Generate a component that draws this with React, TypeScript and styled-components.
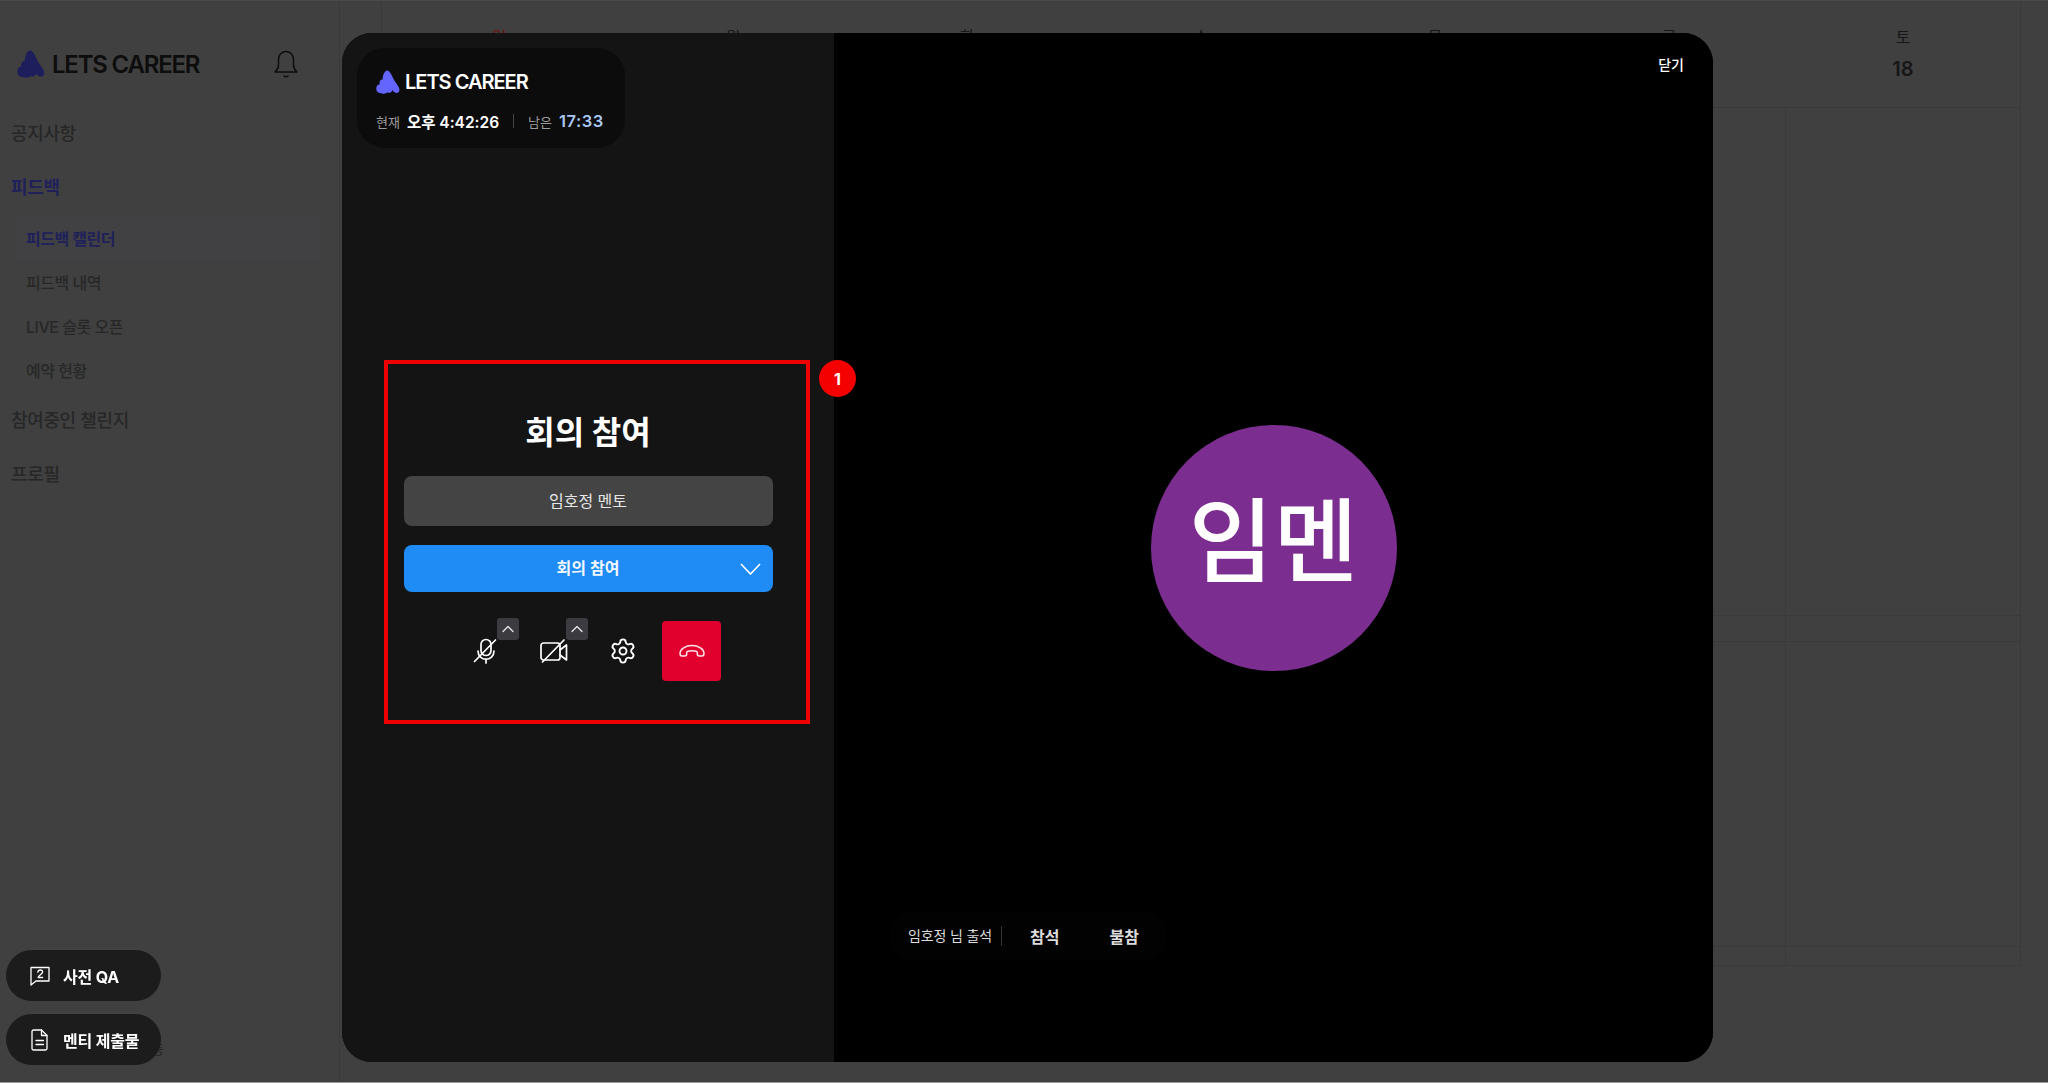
import styled, { createGlobalStyle } from "styled-components"
import { ChevronUp, Settings } from "lucide-react"

const GlobalStyle = createGlobalStyle`
    * {
        box-sizing: border-box;
    }
    html, body {
        margin: 0;
        background: #9a9a9a;
        font-family: Inter, "Noto Sans CJK KR", sans-serif;
    }
`
const Page = styled.div`
    height: 1082px;
    display: flex;
    overflow: hidden;
    background: #404040;
    border-top: 1px solid #4a4a4a;
`
const Sidebar = styled.aside`
    width: 340px;
    flex-shrink: 0;
    display: flex;
    flex-direction: column;
    border-right: 1px solid #3a3a3a;
    padding-top: 48px;
`
const BrandRow = styled.div`
    height: 30px;
    margin-bottom: 26px;
    padding: 0 40px 0 17px;
    display: flex;
    align-items: center;
    justify-content: space-between;
`
const Brand = styled.div<{ $size: number; $gap: number; $color: string }>`
    display: flex;
    align-items: center;
    gap: ${(p) => p.$gap}px;
    font-size: ${(p) => p.$size}px;
    font-weight: 600;
    letter-spacing: -0.05em;
    color: ${(p) => p.$color};
    white-space: nowrap;
`
const NavItem = styled.div<{ $active?: boolean }>`
    height: 54px;
    padding-left: 11px;
    display: flex;
    align-items: center;
    font-size: 18px;
    letter-spacing: -0.02em;
    font-weight: ${(p) => (p.$active ? 600 : 500)};
    color: ${(p) => (p.$active ? "#20205a" : "#272727")};
`
const SubNav = styled.div`
    padding-top: 3px;
    display: flex;
    flex-direction: column;
`
const SubItem = styled.div<{ $active?: boolean }>`
    width: 305px;
    height: 44px;
    margin-left: 15px;
    padding-left: 11px;
    display: flex;
    align-items: center;
    font-size: 16px;
    letter-spacing: -0.03em;
    font-weight: ${(p) => (p.$active ? 600 : 500)};
    color: ${(p) => (p.$active ? "#20205a" : "#272727")};
    background: ${(p) => (p.$active ? "#414143" : "transparent")};
`
const SidebarNote = styled.div`
    margin-top: auto;
    margin-bottom: 24px;
    padding-left: 152px;
    font-size: 13px;
    color: #242424;
`
const Main = styled.main`
    flex: 1;
    padding-left: 41px;
`
const Calendar = styled.div`
    width: 1640px;
    border-left: 1px solid #3a3a3a;
    border-right: 1px solid #3a3a3a;
`
const WeekRow = styled.div<{ $height: number }>`
    display: grid;
    grid-template-columns: repeat(7, 1fr);
    height: ${(p) => p.$height}px;
    border-bottom: 1px solid #3a3a3a;
`
const DayHead = styled.div<{ $sunday?: boolean }>`
    display: flex;
    flex-direction: column;
    align-items: center;
    padding-top: 26px;
    font-size: 16px;
    line-height: 20px;
    gap: 11px;
    color: ${(p) => (p.$sunday ? "#701010" : "#161616")};
`
const DayNumber = styled.span`
    font-size: 20px;
    font-weight: 600;
    line-height: 22px;
`
const DayCell = styled.div`
    border-right: 1px solid #3a3a3a;
    &:last-child {
        border-right: 0;
    }
`
const Backdrop = styled.div`
    position: fixed;
    inset: 0;
    padding: 33px 335px 21px 342px;
    display: flex;
`
const Modal = styled.section`
    position: relative;
    flex: 1;
    display: grid;
    grid-template-columns: 492px 1fr;
    border-radius: 30px;
    overflow: hidden;
    background: #000;
`
const LeftPane = styled.div`
    display: flex;
    flex-direction: column;
    align-items: center;
    padding: 15px 0 0 15px;
    background: #141414;
`
const TimeCard = styled.div`
    align-self: flex-start;
    width: 268px;
    height: 100px;
    padding: 22px 15px 0 19px;
    border-radius: 28px;
    background: #0c0c0c;
`
const TimeRow = styled.div`
    margin-top: 16px;
    display: flex;
    align-items: center;
    white-space: nowrap;
`
const TimeLabel = styled.span`
    font-size: 13px;
    color: #9b9b9b;
    margin-right: 7px;
`
const TimeValue = styled.span<{ $accent?: boolean }>`
    font-size: ${(p) => (p.$accent ? 16.5 : 15.5)}px;
    font-weight: 600;
    letter-spacing: ${(p) => (p.$accent ? "0.03em" : "0")};
    color: ${(p) => (p.$accent ? "#a9c8f5" : "#fff")};
`
const TimeDivider = styled.span`
    flex-shrink: 0;
    width: 1px;
    height: 14px;
    margin: 0 14px;
    background: #444;
`
const JoinForm = styled.div`
    width: 369px;
    margin: 265px 15px 0 0;
    display: flex;
    flex-direction: column;
    align-items: center;
`
const JoinTitle = styled.h2`
    margin: 0 0 23px;
    font-size: 32px;
    line-height: 40px;
    font-weight: 700;
    color: #fff;
`
const NameField = styled.div`
    width: 100%;
    height: 50px;
    padding-bottom: 3px;
    display: flex;
    align-items: center;
    justify-content: center;
    border-radius: 8px;
    background: #444;
    font-size: 16px;
    color: #e6e6e6;
`
const JoinButton = styled.div`
    position: relative;
    width: 100%;
    height: 47px;
    margin-top: 19px;
    padding-bottom: 3px;
    display: flex;
    align-items: center;
    justify-content: center;
    border-radius: 8px;
    background: #1f8bf4;
    font-size: 16px;
    font-weight: 600;
    color: #f2f8ff;
`
const JoinChevron = styled.svg`
    position: absolute;
    right: 12px;
    top: 18px;
`
const Controls = styled.div`
    margin-top: 29px;
    display: flex;
    gap: 10px;
`
const ControlCell = styled.div<{ $danger?: boolean }>`
    position: relative;
    width: 59px;
    height: 60px;
    display: flex;
    align-items: center;
    justify-content: center;
    border-radius: 4px;
    background: ${(p) => (p.$danger ? "#e1002d" : "transparent")};
    color: #fff;
`
const MenuToggle = styled.div`
    position: absolute;
    top: -3px;
    right: -5px;
    width: 22px;
    height: 22px;
    display: flex;
    align-items: center;
    justify-content: center;
    border-radius: 3px;
    background: #3b3b40;
    color: #e8e8e8;
`
const RightPane = styled.div`
    position: relative;
    display: flex;
    align-items: center;
    justify-content: center;
    background: #000;
`
const Avatar = styled.div`
    width: 246px;
    height: 246px;
    padding-bottom: 26px;
    display: flex;
    align-items: center;
    justify-content: center;
    border-radius: 50%;
    background: #7b2e8f;
    font-size: 92px;
    font-weight: 500;
    color: #fff;
`
const CloseLabel = styled.div`
    position: absolute;
    top: 22px;
    right: 29px;
    font-size: 14px;
    line-height: 20px;
    font-weight: 500;
    color: #fff;
`
const Attendance = styled.div`
    position: absolute;
    left: 56px;
    top: 878px;
    height: 50px;
    padding: 0 5px 0 18px;
    display: flex;
    align-items: center;
    border-radius: 25px;
    background: #020202;
`
const AttendanceLabel = styled.span`
    padding-right: 9px;
    border-right: 1px solid #333;
    font-size: 14px;
    letter-spacing: -0.01em;
    line-height: 20px;
    color: #ddd;
`
const AttendanceAction = styled.span`
    margin-left: 28px;
    margin-right: 22px;
    font-size: 16px;
    font-weight: 600;
    color: #dcdcdc;
`
const Highlight = styled.div`
    position: absolute;
    left: 42px;
    top: 327px;
    width: 426px;
    height: 364px;
    border: 4px solid #ee0000;
`
const StepBadge = styled.div`
    position: absolute;
    left: 477px;
    top: 327px;
    width: 37px;
    height: 37px;
    display: flex;
    align-items: center;
    justify-content: center;
    border-radius: 50%;
    background: #f50000;
    font-size: 16px;
    font-weight: 700;
    color: #fff;
`
const FloatingStack = styled.div`
    position: fixed;
    left: 6px;
    top: 950px;
    display: flex;
    flex-direction: column;
    gap: 13px;
`
const FloatingButton = styled.div`
    width: 155px;
    height: 51px;
    padding-left: 24px;
    display: flex;
    align-items: center;
    gap: 13px;
    border-radius: 26px;
    background: #1c1c1c;
    font-size: 16px;
    letter-spacing: -0.01em;
    font-weight: 700;
    color: #fff;
    white-space: nowrap;
`

const LogoMark = ({ size, color }: { size: number; color: string }) => (
    <svg width={size} height={size} viewBox="0 0 28 29" fill={color}>
        <path d="M13 .5C16 .5 18 5 20.500 10.500C23 15.500 27.500 19.500 27.800 23.500C28 27 25 28.700 22.500 27.300C21 26.500 20 25.800 19.300 24.300C19 27 15.700 28.800 13.500 27C12.500 28.600 8.500 29.200 5.800 28C1.800 28.200-.2 26-.2 22.500C-.2 19.500 1.500 17.500 4 17.200C3 14.500 5 11 7.600 11.500C7.200 7 10 .5 13 .5Z" />
    </svg>
)
const BellIcon = () => (
    <svg width="26" height="28" viewBox="0 0 24 28" fill="none" stroke="#0c0c0c" strokeWidth="1.5" strokeLinecap="round" strokeLinejoin="round">
        <path d="M1 22c2.300-2 3.500-3.500 3.500-7V9a7.500 7.500 0 0 1 15 0v6c0 3.500 1.200 5 3.500 7H1z" />
        <path d="M10 26c1 .8 3 .8 4 0" />
    </svg>
)
const MicMutedIcon = () => (
    <svg width="24" height="26" viewBox="0 0 24 26" fill="none" stroke="#fff" strokeWidth="1.7" strokeLinecap="round">
        <rect x="8" y="1.500" width="10" height="16" rx="5" />
        <path d="M5 13c0 11 16 11 16 0" />
        <path d="M13 21v4" />
        <path d="M1.500 23.500 22.500 2" />
    </svg>
)
const CameraMutedIcon = () => (
    <svg width="28" height="24" viewBox="0 0 28 24" fill="none" stroke="#fff" strokeWidth="1.7" strokeLinecap="round" strokeLinejoin="round">
        <rect x="1" y="4" width="19" height="17" rx="2.500" />
        <path d="M20 11l6.500-5v15l-6.500-5" />
        <path d="M2.500 23 24 1" />
    </svg>
)
const HangUpIcon = () => (
    <svg width="28" height="14" viewBox="0 0 26 14" fill="none" stroke="#fbe3e8" strokeWidth="1.5" strokeLinejoin="round">
        <path d="M1 9.500c0-4.500 5.500-8 12-8s12 3.500 12 8c0 1.400-.8 2.500-2 2.500h-2.800c-1.100 0-1.900-.8-1.900-1.900V8.600c0-.7-.4-1.200-1.100-1.300-1.300-.3-2.800-.5-4.200-.5s-2.900.2-4.200.5c-.7.100-1.100.6-1.100 1.300v1.500c0 1.100-.8 1.900-1.900 1.900H3c-1.200 0-2-1.100-2-2.500z" />
    </svg>
)
const QuestionIcon = () => (
    <svg width="20" height="20" viewBox="0 0 20 20" fill="none" stroke="#fff" strokeWidth="1.3" strokeLinejoin="round" strokeLinecap="round">
        <path d="M1 1.500h18v13.500H6L1 19z" />
        <path d="M7.800 6.200c.3-1.500 1.500-2.200 2.500-2.200 1.300 0 2.300.9 2.300 2.100 0 2-3.600 2.800-4.500 5.400h4.500" />
    </svg>
)
const FileIcon = () => (
    <svg width="20" height="22" viewBox="0 0 20 22" fill="none" stroke="#fff" strokeWidth="1.3" strokeLinejoin="round" strokeLinecap="round">
        <path d="M3.500 1h8l5.500 5.500V19.500a1.500 1.500 0 0 1-1.500 1.500h-12A1.500 1.500 0 0 1 2 19.500v-17A1.500 1.500 0 0 1 3.500 1z" />
        <path d="M11.500 1v5.500H17" />
        <path d="M6 11.500h7.500M6 15.500h7.500" />
    </svg>
)

const days = ["일", "월", "화", "수", "목", "금", "토"]
const dates = [12, 13, 14, 15, 16, 17, 18]

const App = () => {
    const renderCells = () => days.map((day) => <DayCell key={`cell-${day}`} />)

    return <>
        <GlobalStyle />
        <Page>
            <Sidebar>
                <BrandRow>
                    <Brand $size={24} $gap={7} $color="#0d0d0d">
                        <LogoMark size={28} color="#1e1e5c" />
                        LETS CAREER
                    </Brand>
                    <BellIcon />
                </BrandRow>
                <NavItem>공지사항</NavItem>
                <NavItem $active>피드백</NavItem>
                <SubNav>
                    <SubItem $active>피드백 캘린더</SubItem>
                    <SubItem>피드백 내역</SubItem>
                    <SubItem>LIVE 슬롯 오픈</SubItem>
                    <SubItem>예약 현황</SubItem>
                </SubNav>
                <NavItem>참여중인 챌린지</NavItem>
                <NavItem>프로필</NavItem>
                <SidebarNote>등</SidebarNote>
            </Sidebar>
            <Main>
                <Calendar>
                    <WeekRow $height={107}>
                        {days.map((day, index) => (
                            <DayHead key={day} $sunday={index === 0}>
                                {day}
                                <DayNumber>{dates[index]}</DayNumber>
                            </DayHead>
                        ))}
                    </WeekRow>
                    <WeekRow $height={508}>{renderCells()}</WeekRow>
                    <WeekRow $height={26}>{renderCells()}</WeekRow>
                    <WeekRow $height={305}>{renderCells()}</WeekRow>
                    <WeekRow $height={19}>{renderCells()}</WeekRow>
                </Calendar>
            </Main>
        </Page>
        <Backdrop>
            <Modal>
                <LeftPane>
                    <TimeCard>
                        <Brand $size={20} $gap={5} $color="#fff">
                            <LogoMark size={24} color="#6464ff" />
                            LETS CAREER
                        </Brand>
                        <TimeRow>
                            <TimeLabel>현재</TimeLabel>
                            <TimeValue>오후 4:42:26</TimeValue>
                            <TimeDivider />
                            <TimeLabel>남은</TimeLabel>
                            <TimeValue $accent>17:33</TimeValue>
                        </TimeRow>
                    </TimeCard>
                    <JoinForm>
                        <JoinTitle>회의 참여</JoinTitle>
                        <NameField>임호정 멘토</NameField>
                        <JoinButton>
                            회의 참여
                            <JoinChevron width="21" height="12" viewBox="0 0 21 12" fill="none" stroke="#fff" strokeWidth="1.6">
                                <path d="M1 1l9.500 10L20 1" />
                            </JoinChevron>
                        </JoinButton>
                        <Controls>
                            <ControlCell>
                                <MicMutedIcon />
                                <MenuToggle><ChevronUp size={20} strokeWidth={1.5} /></MenuToggle>
                            </ControlCell>
                            <ControlCell>
                                <CameraMutedIcon />
                                <MenuToggle><ChevronUp size={20} strokeWidth={1.5} /></MenuToggle>
                            </ControlCell>
                            <ControlCell><Settings size={28} strokeWidth={1.6} /></ControlCell>
                            <ControlCell $danger><HangUpIcon /></ControlCell>
                        </Controls>
                    </JoinForm>
                </LeftPane>
                <RightPane>
                    <Avatar>임멘</Avatar>
                    <CloseLabel>닫기</CloseLabel>
                    <Attendance>
                        <AttendanceLabel>임호정 님 출석</AttendanceLabel>
                        <AttendanceAction>참석</AttendanceAction>
                        <AttendanceAction>불참</AttendanceAction>
                    </Attendance>
                </RightPane>
                <Highlight />
                <StepBadge>1</StepBadge>
            </Modal>
        </Backdrop>
        <FloatingStack>
            <FloatingButton><QuestionIcon />사전 QA</FloatingButton>
            <FloatingButton><FileIcon />멘티 제출물</FloatingButton>
        </FloatingStack>
    </>
}

export default App
